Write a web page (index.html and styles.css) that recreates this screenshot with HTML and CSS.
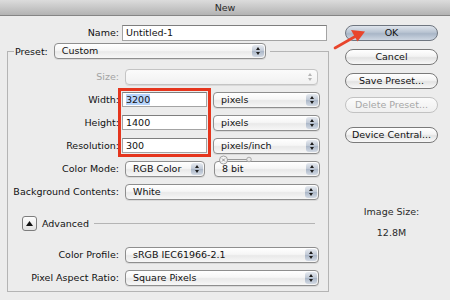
FILE: index.html
```html
<!DOCTYPE html>
<html lang="en">

<head>
  <meta charset="UTF-8" />
  <title>New</title>
  <link rel="stylesheet" href="styles.css">
</head>

<body>
  <div class="window">
    <div class="titlebar">New</div>

    <div class="content">
      <div class="main">
        <div class="row name-row">
          <span class="lbl">Name:</span>
          <div class="field name-field">Untitled-1</div>
        </div>

        <fieldset class="preset-box">
          <legend>
            <span class="legend-lbl">Preset:</span>
            <div class="popup preset-pop"><span class="val">Custom</span><span class="arrows"></span></div>
          </legend>

          <div class="row first">
            <span class="lbl disabled">Size:</span>
            <div class="popup size-pop is-disabled"><span class="val"></span><span class="arrows"></span></div>
          </div>

          <div class="dims">
            <div class="dim-labels">
              <span class="lbl">Width:</span>
              <span class="lbl">Height:</span>
              <span class="lbl">Resolution:</span>
            </div>
            <div class="dim-inputs">
              <div class="field"><span class="sel">3200</span></div>
              <div class="field">1400</div>
              <div class="field">300</div>
            </div>
            <div class="dim-units">
              <div class="popup unit-pop"><span class="val">pixels</span><span class="arrows"></span></div>
              <div class="popup unit-pop"><span class="val">pixels</span><span class="arrows"></span></div>
              <div class="popup unit-pop"><span class="val">pixels/inch</span><span class="arrows"></span></div>
            </div>
          </div>

          <div class="row">
            <span class="lbl">Color Mode:</span>
            <div class="popup mode-pop"><span class="val">RGB Color</span><span class="arrows"></span></div>
            <div class="popup depth-pop">
              <span class="val">8 bit</span><span class="arrows"></span>
              <svg class="knob" width="34" height="10" viewBox="0 0 34 10">
                <line x1="8" y1="4.5" x2="29" y2="4.5" stroke="#9a9a9a" stroke-width="1" />
                <circle cx="4.5" cy="5" r="4" fill="#f4f4f4" stroke="#8c8c8c" stroke-width="0.8" />
                <path d="M3 3.5 L6 6.5 M6 3.5 L3 6.5" stroke="#777" stroke-width="0.8" />
                <circle cx="30" cy="4.5" r="2.3" fill="#e8e8e8" stroke="#9a9a9a" stroke-width="0.8" />
              </svg>
            </div>
          </div>

          <div class="row">
            <span class="lbl">Background Contents:</span>
            <div class="popup wide-pop"><span class="val">White</span><span class="arrows"></span></div>
          </div>

          <div class="advanced">
            <div class="disclosure"><svg width="7" height="5" viewBox="0 0 7 5"><path d="M0 5 L3.5 0 L7 5 Z" fill="#111" /></svg></div>
            <span class="adv-lbl">Advanced</span>
            <span class="adv-line"></span>
          </div>

          <div class="row">
            <span class="lbl">Color Profile:</span>
            <div class="popup wide-pop"><span class="val">sRGB IEC61966-2.1</span><span class="arrows"></span></div>
          </div>

          <div class="row">
            <span class="lbl">Pixel Aspect Ratio:</span>
            <div class="popup wide-pop"><span class="val">Square Pixels</span><span class="arrows"></span></div>
          </div>
        </fieldset>
      </div>

      <div class="side">
        <div class="btn default">OK</div>
        <div class="btn">Cancel</div>
        <div class="btn">Save Preset...</div>
        <div class="btn is-disabled">Delete Preset...</div>
        <div class="btn central">Device Central...</div>
        <div class="image-size">
          <div>Image Size:</div>
          <div class="size-val">12.8M</div>
        </div>
      </div>
    </div>

    <!-- annotation arrow pointing at OK -->
    <svg class="arrow" width="40" height="24" viewBox="330 28 40 24">
      <line x1="335" y1="48" x2="356" y2="36" stroke="#e8452c" stroke-width="2.6" stroke-linecap="round" />
      <polygon points="365,31.5 351,30 357.5,41.5" fill="#e8452c" />
    </svg>
  </div>
</body>

</html>
```

FILE: styles.css
```css
body {
  margin: 0;
  background: #ececec;
  font-family: 'DejaVu Sans', sans-serif;
  font-size: 9.5px;
  color: #111;
}
.window {
  position: relative;
  width: 450px;
  height: 300px;
  overflow: hidden;
  background: #ececec;
}
.titlebar {
  height: 15px;
  line-height: 15px;
  text-align: center;
  color: #2a2a2a;
  font-size: 9.5px;
  background: linear-gradient(#dcdcdc, #b3b3b3);
  border-bottom: 1px solid #858585;
}
.content {
  display: flex;
  padding: 8px 12px 0 7px;
}
.main {
  width: 322px;
}
.row {
  display: flex;
  align-items: center;
  height: 23px;
}
.lbl {
  width: 111px;
  flex: none;
  text-align: right;
  white-space: nowrap;
}
.lbl.disabled {
  color: #a3a3a3;
}
.name-row {
  height: 17px;
}
.name-row .lbl {
  width: 112px;
}
.field {
  box-sizing: border-box;
  height: 15px;
  line-height: 13px;
  padding-left: 3px;
  background: #fff;
  border: 1px solid #a4a4a4;
  border-top-color: #7e7e7e;
}
.name-field {
  margin-left: 3px;
  width: 205px;
  height: 16px;
  line-height: 14px;
}
.sel {
  background: #b7d4fb;
}

/* group box */
.preset-box {
  margin: 2px 0 0;
  padding: 6px 0 2px;
  border: 1px solid #b4b4b4;
  width: 322px;
  box-sizing: border-box;
}
legend {
  display: flex;
  align-items: center;
  margin-left: 6px;
  padding: 0 4px 0 1px;
}
.legend-lbl {
  margin-right: 6px;
}

/* popup menus */
.popup {
  position: relative;
  box-sizing: border-box;
  display: flex;
  align-items: stretch;
  height: 16px;
  border: 1px solid #8e8e8e;
  border-radius: 4px;
  background: linear-gradient(#ffffff, #f6f6f6 45%, #e9e9e9 55%, #f7f7f7);
  box-shadow: 0 1px 0 rgba(0, 0, 0, 0.08);
}
.popup .val {
  flex: 1;
  padding-left: 7px;
  line-height: 14px;
  white-space: nowrap;
}
.popup .arrows {
  position: relative;
  width: 12px;
  margin: 1px;
  border-radius: 3px;
  background: linear-gradient(#e6eaf0, #bfc8d5 50%, #aab6c7 51%, #d3dae4);
}
.popup .arrows::before,
.popup .arrows::after {
  content: '';
  position: absolute;
  left: 4px;
  border-left: 2px solid transparent;
  border-right: 2px solid transparent;
}
.popup .arrows::before {
  top: 2px;
  border-bottom: 3px solid #1d1d1d;
}
.popup .arrows::after {
  bottom: 2px;
  border-top: 3px solid #1d1d1d;
}
.popup.is-disabled {
  border-color: #c4c4c4;
  background: linear-gradient(#fbfbfb, #f1f1f1);
}
.popup.is-disabled .arrows {
  background: none;
}
.popup.is-disabled .arrows::before {
  border-bottom-color: #b5b5b5;
}
.popup.is-disabled .arrows::after {
  border-top-color: #b5b5b5;
}
.preset-pop {
  width: 212px;
}
.size-pop {
  margin-left: 6px;
  width: 193px;
}
.mode-pop {
  margin-left: 6px;
  width: 80px;
}
.depth-pop {
  margin-left: 9px;
  width: 106px;
}
.wide-pop {
  margin-left: 6px;
  width: 194px;
}
.knob {
  position: absolute;
  left: 4px;
  top: -7px;
}

/* width / height / resolution block */
.dims {
  display: flex;
}
.dim-labels,
.dim-units {
  display: flex;
  flex-direction: column;
}
.dim-labels .lbl {
  height: 23px;
  line-height: 23px;
}
.dim-inputs {
  margin-left: -1px;
  width: 93px;
  height: 69px;
  box-sizing: border-box;
  border: 3px solid #e5351d;
  padding: 1px 1px;
  display: flex;
  flex-direction: column;
  justify-content: space-between;
}
.dim-units {
  margin-left: 2px;
  justify-content: space-around;
}
.unit-pop {
  width: 107px;
}

/* advanced */
.advanced {
  display: flex;
  align-items: center;
  height: 17px;
  margin: 12px 13px 11px 14px;
}
.disclosure {
  box-sizing: border-box;
  width: 15px;
  height: 15px;
  border: 1px solid #7d7d7d;
  border-radius: 3px;
  background: linear-gradient(#fdfdfd, #e2e2e2);
  display: flex;
  align-items: center;
  justify-content: center;
}
.adv-lbl {
  margin-left: 5px;
}
.adv-line {
  flex: 1;
  margin-left: 5px;
  border-top: 1px solid #b4b4b4;
}

/* buttons */
.side {
  margin-left: 16px;
  width: 93px;
  padding-top: 1px;
}
.btn {
  box-sizing: border-box;
  height: 16px;
  line-height: 14px;
  margin-bottom: 8px;
  text-align: center;
  border: 1px solid #7a7a7a;
  border-radius: 8px;
  background: linear-gradient(#ffffff, #f3f3f3 45%, #e3e3e3 55%, #f8f8f8);
  white-space: nowrap;
}
.btn.default {
  background: linear-gradient(#dfe5ed, #b9c4d2 45%, #a9b6c7 55%, #cdd6e2);
  border-color: #6f7680;
}
.btn.is-disabled {
  color: #a7a7a7;
  border-color: #c2c2c2;
  background: linear-gradient(#fbfbfb, #efefef);
}
.btn.central {
  margin-top: 14px;
}
.image-size {
  margin-top: 62px;
  text-align: center;
  color: #2a2a2a;
  line-height: 14px;
}
.size-val {
  margin-top: 7px;
}

.arrow {
  position: absolute;
  left: 330px;
  top: 28px;
}
```
